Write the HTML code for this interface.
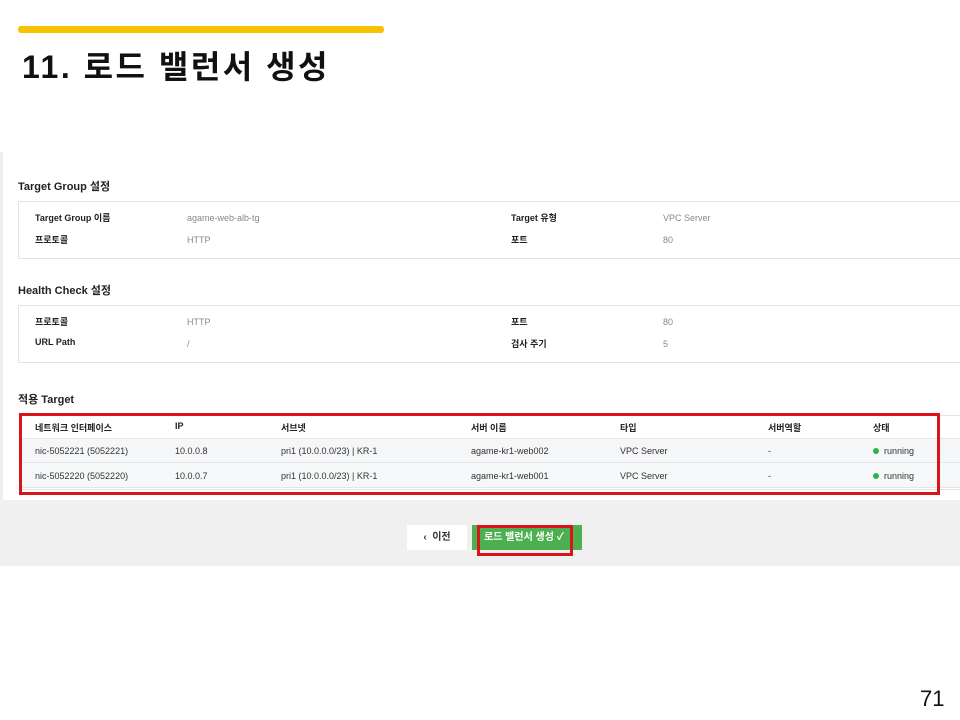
<!DOCTYPE html>
<html><head><meta charset="utf-8"><style>
*{margin:0;padding:0;box-sizing:border-box}
body{width:960px;height:720px;background:#fff;position:relative;font-family:"Liberation Sans","Noto Sans CJK KR",sans-serif;overflow:hidden}
.a{position:absolute;white-space:nowrap}
.bar{left:18px;top:26px;width:366px;height:7px;background:#f7c300;border-radius:3px}
.title{left:22px;top:42px;font-size:32px;font-weight:bold;color:#111;letter-spacing:2.5px}
.shot{left:0;top:152px;width:960px;height:414px;background:#fff;border-left:3px solid #eee}
.h{font-size:11px;font-weight:bold;color:#222}
.box{border:1px solid #e3e3e3;background:#fff}
.k{font-size:9px;font-weight:bold;color:#222}
.v{font-size:9px;color:#888;margin-top:2px}
.t{font-size:9px;color:#333}
.foot{left:0;top:500px;width:960px;height:66px;background:#f0f0f0}
.dot{display:inline-block;width:6px;height:6px;border-radius:50%;background:#2cb34a;margin-right:5px;vertical-align:0}
</style></head><body>
<div class="a bar"></div>
<div class="a title">11. 로드 밸런서 생성</div>
<div class="a shot"></div>
<div class="a h" style="left:18px;top:178px">Target Group 설정</div>
<div class="a box" style="left:18px;top:201px;width:950px;height:58px"></div>
<div class="a k" style="left:35px;top:211px">Target Group 이름</div>
<div class="a v" style="left:187px;top:211px">agame-web-alb-tg</div>
<div class="a k" style="left:511px;top:211px">Target 유형</div>
<div class="a v" style="left:663px;top:211px">VPC Server</div>
<div class="a k" style="left:35px;top:233px">프로토콜</div>
<div class="a v" style="left:187px;top:233px">HTTP</div>
<div class="a k" style="left:511px;top:233px">포트</div>
<div class="a v" style="left:663px;top:233px">80</div>
<div class="a h" style="left:18px;top:282px">Health Check 설정</div>
<div class="a box" style="left:18px;top:305px;width:950px;height:58px"></div>
<div class="a k" style="left:35px;top:315px">프로토콜</div>
<div class="a v" style="left:187px;top:315px">HTTP</div>
<div class="a k" style="left:511px;top:315px">포트</div>
<div class="a v" style="left:663px;top:315px">80</div>
<div class="a k" style="left:35px;top:337px">URL Path</div>
<div class="a v" style="left:187px;top:337px">/</div>
<div class="a k" style="left:511px;top:337px">검사 주기</div>
<div class="a v" style="left:663px;top:337px">5</div>
<div class="a h" style="left:18px;top:391px">적용 Target</div>
<div class="a" style="left:20px;top:415px;width:950px;height:75px;border:1px solid #e3e3e3"></div>
<div class="a" style="left:21px;top:438px;width:949px;height:25px;background:#f5f6f8;border-top:1px solid #e6e6e6;border-bottom:1px solid #e6e6e6"></div>
<div class="a" style="left:21px;top:463px;width:949px;height:25px;background:#f7f8f9;border-bottom:1px solid #e6e6e6"></div>
<div class="a k" style="left:35px;top:421px">네트워크 인터페이스</div>
<div class="a k" style="left:175px;top:421px">IP</div>
<div class="a k" style="left:281px;top:421px">서브넷</div>
<div class="a k" style="left:471px;top:421px">서버 이름</div>
<div class="a k" style="left:620px;top:421px">타입</div>
<div class="a k" style="left:768px;top:421px">서버역할</div>
<div class="a k" style="left:873px;top:421px">상태</div>
<div class="a t" style="left:35px;top:446px">nic-5052221 (5052221)</div>
<div class="a t" style="left:175px;top:446px">10.0.0.8</div>
<div class="a t" style="left:281px;top:446px">pri1 (10.0.0.0/23) | KR-1</div>
<div class="a t" style="left:471px;top:446px">agame-kr1-web002</div>
<div class="a t" style="left:620px;top:446px">VPC Server</div>
<div class="a t" style="left:768px;top:446px">-</div>
<div class="a t" style="left:873px;top:446px"><span class="dot"></span>running</div>
<div class="a t" style="left:35px;top:471px">nic-5052220 (5052220)</div>
<div class="a t" style="left:175px;top:471px">10.0.0.7</div>
<div class="a t" style="left:281px;top:471px">pri1 (10.0.0.0/23) | KR-1</div>
<div class="a t" style="left:471px;top:471px">agame-kr1-web001</div>
<div class="a t" style="left:620px;top:471px">VPC Server</div>
<div class="a t" style="left:768px;top:471px">-</div>
<div class="a t" style="left:873px;top:471px"><span class="dot"></span>running</div>
<div class="a" style="left:19px;top:413px;width:921px;height:82px;border:3px solid #d9141b"></div>
<div class="a foot"></div>
<div class="a" style="left:407px;top:525px;width:60px;height:25px;background:#fff;font-size:10px;font-weight:bold;color:#333;line-height:25px;text-align:center">&lsaquo;&nbsp; 이전</div>
<div class="a" style="left:472px;top:525px;width:110px;height:25px;background:#4caf50;font-size:10px;font-weight:bold;color:#fff;line-height:25px;padding-left:12px">로드 밸런서 생성 ✓</div>
<div class="a" style="left:477px;top:525px;width:96px;height:31px;border:3px solid #d9141b"></div>
<div class="a" style="left:920px;top:686px;font-size:22px;color:#111">71</div>
</body></html>
